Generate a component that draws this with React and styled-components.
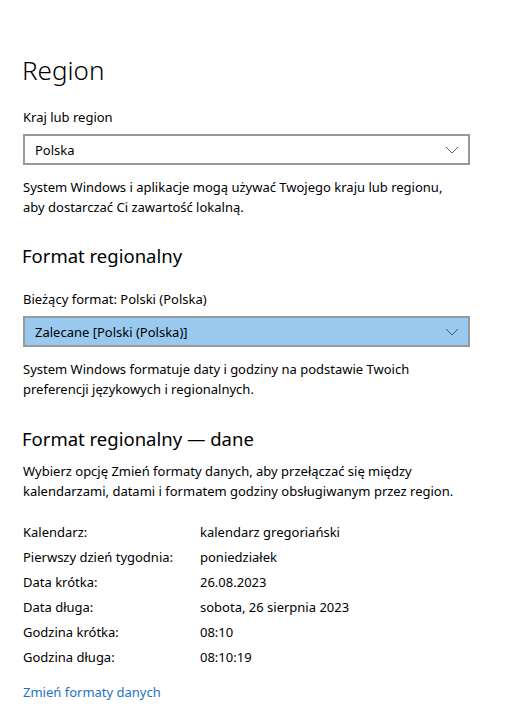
import React from 'react';
import styled, { createGlobalStyle } from 'styled-components';

const GlobalStyle = createGlobalStyle`
  html, body {
    margin: 0;
    padding: 0;
    background: #fff;
  }
  body {
    font-family: "Noto Sans", "Open Sans", sans-serif;
    color: #000;
  }
`;

const Page = styled.main`
  width: 520px;
  padding: 52px 40px 20px 23px;
  box-sizing: border-box;
`;

const Title = styled.h1`
  margin: 0 0 19px -1px;
  font-size: 26px;
  line-height: 36px;
  font-weight: 300;
`;

const Heading = styled.h2`
  margin: ${p => p.$top}px 0 ${p => p.$bottom}px -1px;
  font-size: 18.5px;
  line-height: 28px;
  font-weight: 400;
`;

const Label = styled.div`
  font-size: 13px;
  line-height: 20px;
  margin-bottom: 7px;
`;

const Select = styled.div`
  width: 447px;
  height: 31px;
  box-sizing: border-box;
  border: 2px solid #999;
  background: ${p => (p.$active ? '#99c9ef' : '#fff')};
  display: flex;
  align-items: center;
  justify-content: space-between;
  padding: 0 9px 0 10px;
  font-size: 13px;
`;

const Text = styled.p`
  margin: ${p => p.$top || 0}px 0 0;
  font-size: 13px;
  line-height: 20px;
`;

const Table = styled.div`
  margin-top: 19px;
  display: grid;
  grid-template-columns: 177px auto;
  font-size: 13px;
  line-height: 25px;
`;

const Link = styled.a`
  display: block;
  margin-top: 12px;
  font-size: 13px;
  line-height: 20px;
  color: #1e72c2;
  text-decoration: none;
`;

const Chevron = ({ color }) => (
  <svg width="14" height="8" viewBox="0 0 14 8">
    <path d="M1 1 L7 7 L13 1" fill="none" stroke={color} strokeWidth="1" />
  </svg>
);

const rows = [
  ['Kalendarz:', 'kalendarz gregoriański'],
  ['Pierwszy dzień tygodnia:', 'poniedziałek'],
  ['Data krótka:', '26.08.2023'],
  ['Data długa:', 'sobota, 26 sierpnia 2023'],
  ['Godzina krótka:', '08:10'],
  ['Godzina długa:', '08:10:19'],
];

export default function App() {
  return (
    <>
      <GlobalStyle />
      <Page>
        <Title>Region</Title>
        <Label>Kraj lub region</Label>
        <Select>
          <span>Polska</span>
          <Chevron color="#666" />
        </Select>
        <Text $top={12}>
          System Windows i aplikacje mogą używać Twojego kraju lub regionu,
          <br />
          aby dostarczać Ci zawartość lokalną.
        </Text>

        <Heading $top={25} $bottom={19}>Format regionalny</Heading>
        <Label>Bieżący format: Polski (Polska)</Label>
        <Select $active>
          <span>Zalecane [Polski (Polska)]</span>
          <Chevron color="#3c5a7d" />
        </Select>
        <Text $top={12}>
          System Windows formatuje daty i godziny na podstawie Twoich
          <br />
          preferencji językowych i regionalnych.
        </Text>

        <Heading $top={26} $bottom={8}>Format regionalny — dane</Heading>
        <Text>
          Wybierz opcję Zmień formaty danych, aby przełączać się między
          <br />
          kalendarzami, datami i formatem godziny obsługiwanym przez region.
        </Text>
        <Table>
          {rows.map(([k, v]) => (
            <React.Fragment key={k}>
              <span>{k}</span>
              <span>{v}</span>
            </React.Fragment>
          ))}
        </Table>
        <Link href="#">Zmień formaty danych</Link>
      </Page>
    </>
  );
}
